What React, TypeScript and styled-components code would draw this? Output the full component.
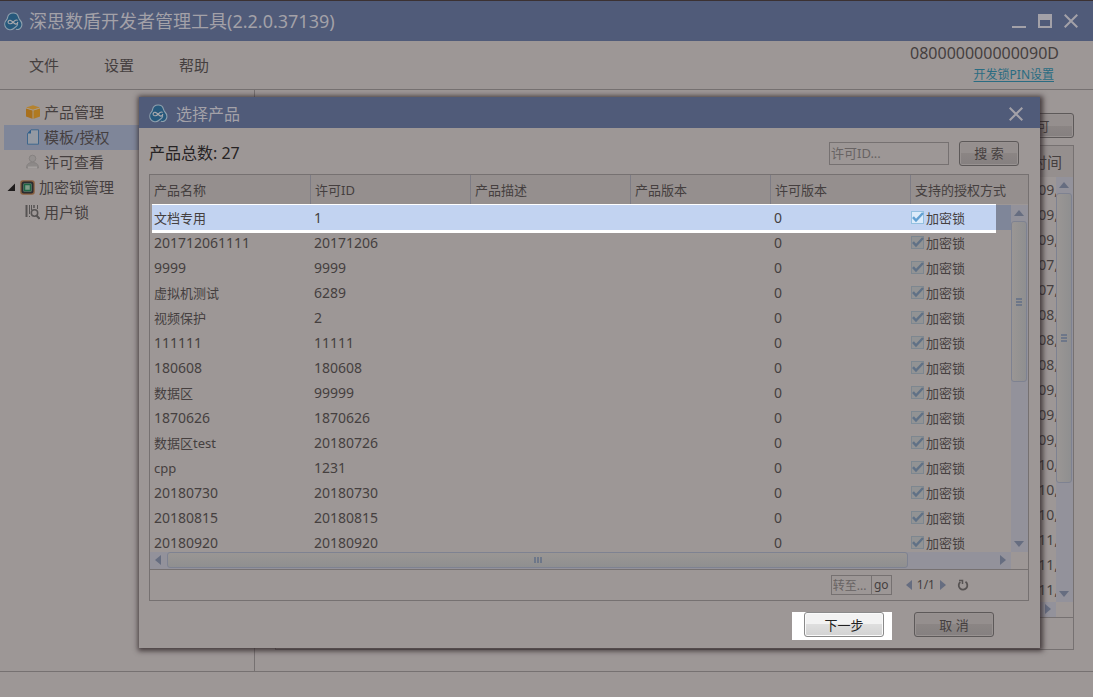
import React from "react";
import styled, { createGlobalStyle, css } from "styled-components";

const c = {
  page: "#9d9796",
  blue: "#505b79",
  titleText: "#a3a1a8",
  line: "#767171",
  text: "#453f3f",
  strong: "#262324",
  head: "#958f8e",
  selectDim: "#7f8699",
  selectBright: "#c2d3f1",
  track: "#93929b",
  trackEdge: "#7e8291",
  arrow: "#666d80",
};

const GlobalStyle = createGlobalStyle`
  * { box-sizing: border-box; }
  body {
    margin: 0;
    background: ${c.page};
    color: ${c.text};
    font-family: "Noto Sans", "Noto Sans CJK SC", sans-serif;
    font-size: 13px;
    line-height: 20px;
  }
  button, input { font-family: inherit; }
`;

const Window = styled.div`
  position: relative;
  min-height: 100vh;
  display: flex;
  flex-direction: column;
  overflow: hidden;
`;

const TitleBar = styled.header`
  height: 41px;
  border-top: 1px solid #3b3132;
  background: ${c.blue};
  color: ${c.titleText};
  display: flex;
  align-items: center;
  gap: 6px;
  padding: 0 15px 0 4px;
`;

const AppTitle = styled.h1`
  flex: 1;
  margin: 0;
  font-size: 18px;
  font-weight: 400;
  line-height: 24px;
`;

const WindowButtons = styled.div`
  display: flex;
  gap: 12px;
`;

const GlyphButton = styled.button`
  display: flex;
  padding: 0;
  border: 0;
  background: none;
  color: inherit;
`;

const MenuBar = styled.div`
  height: 49px;
  border-bottom: 1px solid ${c.line};
  display: flex;
  justify-content: space-between;
  padding: 0 34px 0 29px;
`;

const Menus = styled.nav`
  display: flex;
  align-items: center;
  gap: 45px;
`;

const MenuButton = styled.button`
  padding: 0;
  border: 0;
  background: none;
  color: ${c.text};
  font-size: 15px;
  line-height: 20px;
`;

const LockInfo = styled.div`
  display: flex;
  flex-direction: column;
  align-items: flex-end;
  font-size: 16px;
  line-height: 24px;
`;

const PinLink = styled.a`
  margin-right: 5px;
  color: #2a6c82;
  font-size: 12px;
  line-height: 20px;
  text-underline-offset: 2px;
`;

const Body = styled.div`
  flex: 1;
  display: flex;
  border-bottom: 1px solid ${c.line};
`;

const Sidebar = styled.nav`
  width: 255px;
  border-right: 1px solid ${c.line};
  padding: 10px 0 0 4px;
`;

const Tree = styled.ul`
  list-style: none;
  margin: 0;
  padding: 0;
`;

const TreeLink = styled.a<{ $active?: boolean; $group?: boolean }>`
  display: flex;
  align-items: center;
  gap: 4px;
  height: 25px;
  padding: 0 0 2px ${(p) => (p.$group ? 3 : 20)}px;
  background: ${(p) => (p.$active ? c.selectDim : "none")};
  color: ${c.text};
  font-size: 15px;
  text-decoration: none;
`;

const Content = styled.main`
  flex: 1;
  display: flex;
  flex-direction: column;
  padding: 23px 19px 21px 20px;
`;

const ContentTools = styled.div`
  display: flex;
  justify-content: flex-end;
  margin-bottom: 7px;
`;

const PushButton = styled.button<{ $width: number; $bright?: boolean }>`
  width: ${(p) => p.$width}px;
  height: 25px;
  padding: 0;
  border: 1px solid ${(p) => (p.$bright ? "#8a8a8a" : "#5d5959")};
  border-radius: 3px;
  box-shadow: inset 0 0 0 1px ${(p) => (p.$bright ? "#fafafa" : "#989291")};
  background: ${(p) =>
    p.$bright
      ? "linear-gradient(#f2f2f2 50%, #dedede 50%, #d2d2d2)"
      : "linear-gradient(#958f8e 50%, #8b8584 50%, #858080)"};
  color: ${(p) => (p.$bright ? "#222" : c.text)};
  font-size: 13px;
  line-height: 20px;
`;

const LicensePanel = styled.section`
  flex: 1;
  display: flex;
  flex-direction: column;
  border: 1px solid ${c.line};
`;

const LicenseList = styled.div`
  display: grid;
  grid-template-columns: 1fr 17px;
  grid-template-rows: 31px 425px 15px;
  border-bottom: 1px solid ${c.line};
`;

const LicenseTable = styled.table`
  border-collapse: collapse;
  width: 100%;
  th {
    height: 31px;
    padding: 0 11px 0 0;
    background: ${c.head};
    font-size: 15px;
    font-weight: 400;
    text-align: right;
  }
  td {
    height: 25px;
    padding: 0 15px 0 0;
    font-size: 14px;
    text-align: right;
  }
`;

const TableArea = styled.div`
  grid-area: 1 / 1 / 3 / 3;
  overflow: hidden;
  min-height: 0;
`;

const trackStyle = css`
  display: flex;
  align-items: center;
  background: ${c.track};
  z-index: 1;
`;

const VTrack = styled.div`
  ${trackStyle}
  grid-area: 2 / 2;
  flex-direction: column;
  padding: 5px 1px 5px 0;
`;

const HTrack = styled.div`
  ${trackStyle}
  grid-area: 3 / 1;
  padding: 0 5px 1px;
`;

const VThumb = styled.div<{ $size: number }>`
  flex: 0 0 ${(p) => p.$size}px;
  align-self: stretch;
  margin: 5px 0 auto;
  border: 1px solid ${c.trackEdge};
  border-radius: 3px;
  background: linear-gradient(to right, #9a9694, #8f8f90);
  display: grid;
  place-items: center;
`;

const HThumb = styled.div`
  flex: 0 1 741px;
  height: 16px;
  margin: 0 auto 0 6px;
  border: 1px solid ${c.trackEdge};
  border-radius: 3px;
  background: linear-gradient(#9a9694, #8f8f90);
  display: grid;
  place-items: center;
`;

const StatusBar = styled.footer`
  height: 25px;
`;

const Dialog = styled.section`
  position: absolute;
  z-index: 2;
  top: 97px;
  left: 139px;
  right: 53px;
  background: ${c.page};
  box-shadow: 1px 1px 5px 2px rgba(40, 30, 32, 0.75);
`;

const DialogBar = styled.header`
  display: flex;
  align-items: center;
  gap: 8px;
  height: 31px;
  padding: 2px 17px 0 10px;
  background: ${c.blue};
  color: ${c.titleText};
`;

const DialogTitle = styled.h2`
  flex: 1;
  margin: 0;
  font-size: 16px;
  font-weight: 400;
  line-height: 24px;
`;

const DialogBody = styled.div`
  padding: 12px 11px 8px 10px;
`;

const SearchRow = styled.form`
  display: flex;
  align-items: center;
  gap: 10px;
  height: 26px;
  margin-bottom: 8px;
  padding-right: 10px;
`;

const Total = styled.p`
  flex: 1;
  margin: 0;
  color: ${c.strong};
  font-size: 16px;
`;

const TextField = styled.input<{ $width: number; $height: number }>`
  width: ${(p) => p.$width}px;
  height: ${(p) => p.$height}px;
  padding: 0 2px 0 1px;
  border: 1px solid ${c.line};
  border-radius: 0;
  background: none;
  color: ${c.text};
  font-size: ${(p) => (p.$height > 20 ? 13 : 12)}px;
  &::placeholder { color: #686363; opacity: 1; }
`;

const ProductPanel = styled.div`
  border: 1px solid ${c.line};
`;

const ProductGrid = styled.div`
  display: grid;
  grid-template-columns: 1fr 17px;
  grid-template-rows: 30px 347px 17px;
  border-bottom: 1px solid ${c.line};
`;

/* White frame that marks the chosen row. */
const RowSpotlight = styled.div`
  grid-area: 2 / 1;
  height: 29px;
  margin: -1px 15px 0 2px;
  background: #fff;
`;

const ProductTable = styled.table`
  position: relative;
  table-layout: fixed;
  width: 100%;
  border-collapse: separate;
  border-spacing: 0;
`;

const HeadCell = styled.th<{ $width?: number }>`
  width: ${(p) => (p.$width ? `${p.$width}px` : "auto")};
  height: 29px;
  padding: 0 4px;
  border-right: 1px solid ${(p) => (p.$width ? "#7d7c85" : "transparent")};
  background: ${c.head};
  font-weight: 400;
  text-align: left;
  white-space: nowrap;
`;

const HeadGap = styled.td`
  height: 1px;
  padding: 0;
`;

const Row = styled.tr<{ $selected: boolean }>`
  background: ${(p) =>
    p.$selected
      ? `linear-gradient(to right, transparent 2px, ${c.selectBright} 2px, ${c.selectBright} calc(100% - 32px), ${c.selectDim} calc(100% - 32px))`
      : "none"};
`;

const Cell = styled.td<{ $digits?: boolean }>`
  height: 25px;
  padding: 0 3px;
  font-size: ${(p) => (p.$digits ? 14 : 13)}px;
  white-space: nowrap;
  &:first-child { padding-left: 4px; }
`;

const CheckCell = styled(Cell)`
  padding: 0;
`;

const CheckLabel = styled.label`
  display: flex;
  align-items: center;
  gap: 2px;
`;

const CheckBox = styled.span<{ $bright: boolean }>`
  display: grid;
  color: ${(p) => (p.$bright ? "#62a0d2" : "#607186")};
  input, svg { grid-area: 1 / 1; }
  input {
    appearance: none;
    width: 13px;
    height: 13px;
    margin: 0;
    border: 1px solid ${(p) => (p.$bright ? "#94c0e0" : "#7d8790")};
    background: ${(p) => (p.$bright ? "#dcebfa" : "#929394")};
  }
  svg { pointer-events: none; }
`;

const Pager = styled.div`
  display: flex;
  align-items: center;
  justify-content: flex-end;
  height: 30px;
  padding-right: 59px;
  font-size: 12px;
`;

const GoButton = styled.button`
  width: 21px;
  height: 20px;
  margin: 0 14px 0 -1px;
  padding: 0;
  border: 1px solid ${c.line};
  background: none;
  color: ${c.text};
  font-size: 12px;
  line-height: 16px;
`;

const PageCount = styled.span`
  margin: 0 5px;
`;

const RefreshButton = styled(GlyphButton)`
  margin-left: 11px;
`;

const Actions = styled.div`
  display: flex;
  justify-content: flex-end;
  gap: 22px;
  padding: 11px 35px 0 0;
`;

const ActionSpotlight = styled.div`
  padding: 0 8px 3px 12px;
  background: #fff;
`;

function Logo() {
  return (
    <svg width="19" height="19" viewBox="0 0 19 19" fill="none" aria-hidden="true">
      <path
        d="M9 1C12 .6 13.800 2.300 14.400 4.800 14.800 6.500 16.200 7.200 17.200 8.900 18.600 11.500 18.300 14.500 16.500 16.300 15.400 17.500 13.500 18 12 17.300H9C6.500 18.600 3.300 17.800 1.800 15.500.300 13.200.500 10 2.300 8.200 3.300 7.100 3.400 6.500 3.700 5 4.200 2.600 6.300 1.100 9 1Z"
        fill="#27597c"
      />
      <path
        d="M12.300 17.200C14.500 18.200 16.800 16.500 17.500 14.500 18.400 12 17.700 9.800 16 8 15 7 14.800 6 14.400 4.800 13.700 2.300 11.700.900 9 1 6.300 1.100 4.200 2.600 3.700 5 3.400 6.500 3.300 7.100 2.300 8.200.500 10 .300 13.200 1.800 15.500 3.500 18 7.500 18.500 9.700 16.500 11 15.300 13.600 14.400 13.700 12"
        stroke="#8fa0ad"
        strokeWidth="1.100"
        strokeLinecap="round"
      />
      <path
        d="M13.200 8.200C11.300 7.300 10 9.300 8.800 10.500 7.500 11.800 5.400 12.300 4.400 11 3.500 9.700 4.700 8 6.300 8.300 8 8.600 9 10.300 10.500 11.500 11.800 12.500 13.700 12 13.700 10.300"
        stroke="#a9a9ad"
        strokeWidth="1.200"
        strokeLinecap="round"
      />
    </svg>
  );
}

function CloseGlyph() {
  return (
    <svg width="14" height="14" viewBox="0 0 14 14" stroke="currentColor" strokeWidth="2" aria-hidden="true">
      <path d="M.7.7 13.300 13.300M13.300.7.7 13.300" />
    </svg>
  );
}

type ArrowDir = "up" | "down" | "left" | "right";

const arrowPaths: Record<ArrowDir, [number, number, string]> = {
  up: [10, 6, "M0 6 5 0 10 6Z"],
  down: [10, 6, "M0 0 5 6 10 0Z"],
  left: [6, 10, "M6 0 0 5 6 10Z"],
  right: [6, 10, "M0 0 6 5 0 10Z"],
};

function Arrow({ dir }: { dir: ArrowDir }) {
  const [w, h, d] = arrowPaths[dir];
  return (
    <svg width={w} height={h} viewBox={`0 0 ${w} ${h}`} aria-hidden="true">
      <path d={d} fill={c.arrow} />
    </svg>
  );
}

function Grip({ vertical }: { vertical?: boolean }) {
  return (
    <svg width="8" height="8" viewBox="0 0 8 8" stroke="#626f87" aria-hidden="true">
      <path d={vertical ? "M1 1H7M1 4H7M1 7H7" : "M1 1V7M4 1V7M7 1V7"} strokeWidth="1.500" />
    </svg>
  );
}

function BoxIcon() {
  return (
    <svg width="16" height="16" viewBox="0 0 16 16" aria-hidden="true">
      <path d="M2 4 9 6.500V15L2 12.500Z" fill="#a8701d" />
      <path d="M16 4 9 6.500V15L16 12.500Z" fill="#b07a20" />
      <path d="M2 3.500 9 1.200 16 3.500 9 6Z" fill="#b5832f" />
      <path d="M9 6.500V15M2 4 9 6.200 16 4" stroke="#a99a86" fill="none" />
    </svg>
  );
}

function DocIcon() {
  return (
    <svg width="16" height="16" viewBox="0 0 16 16" aria-hidden="true">
      <path d="M7 .8H14.500V15.200H3.500V4.500Z" fill="#949aa3" stroke="#3f678d" />
      <path d="M7 .8V4.500H3.500Z" fill="#2f5f8b" />
    </svg>
  );
}

function PersonIcon() {
  return (
    <svg width="16" height="16" viewBox="0 0 16 16" aria-hidden="true">
      <path d="M2.500 14C2.500 10 5 8.500 8.500 8.500s6 1.500 6 5.500Z" fill="#8d8988" stroke="#868281" />
      <path d="M4 13.500H13" stroke="#a5a09f" strokeWidth="2" />
      <circle cx="8.500" cy="4.500" r="3.300" fill="#94908f" stroke="#868281" />
    </svg>
  );
}

function ChipIcon() {
  return (
    <svg width="16" height="16" viewBox="0 0 16 16" aria-hidden="true">
      <rect x="2" y="2" width="13" height="13" rx="2" fill="#89572f" stroke="#89603f" strokeWidth="1.500" />
      <rect x="3.500" y="3.500" width="10" height="10" rx="1.500" fill="#8fa395" stroke="#2b2c30" strokeWidth="2" />
      <rect x="5.500" y="5.500" width="6" height="6" fill="#7f9b88" stroke="#1f6645" strokeWidth="1.500" />
    </svg>
  );
}

function UserLockIcon() {
  return (
    <svg width="16" height="16" viewBox="0 0 16 16" fill="none" stroke="#565353" aria-hidden="true">
      <path d="M2.500 1V13" strokeWidth="2" />
      <path d="M5.500 1V10M7.500 1V6M5.500 12V13M13.500 1V5" />
      <path d="M10 1V4" strokeWidth="1.500" />
      <circle cx="10.500" cy="9" r="3.200" strokeWidth="1.500" />
      <path d="M12.500 11.500 15.500 14.800" strokeWidth="2" />
    </svg>
  );
}

const treeItems: { label: string; icon: React.ReactNode; active?: boolean; group?: boolean }[] = [
  { label: "产品管理", icon: <BoxIcon /> },
  { label: "模板/授权", icon: <DocIcon />, active: true },
  { label: "许可查看", icon: <PersonIcon /> },
  { label: "加密锁管理", icon: <ChipIcon />, group: true },
  { label: "用户锁", icon: <UserLockIcon /> },
];

const licenseDates = ["09", "09", "09", "07", "07", "08", "08", "08", "09", "09", "09", "10", "10", "10", "11", "11", "11"];

const products: [string, string][] = [
  ["文档专用", "1"],
  ["201712061111", "20171206"],
  ["9999", "9999"],
  ["虚拟机测试", "6289"],
  ["视频保护", "2"],
  ["111111", "11111"],
  ["180608", "180608"],
  ["数据区", "99999"],
  ["1870626", "1870626"],
  ["数据区test", "20180726"],
  ["cpp", "1231"],
  ["20180730", "20180730"],
  ["20180815", "20180815"],
  ["20180920", "20180920"],
];

const columns: [string, number?][] = [
  ["产品名称", 161],
  ["许可ID", 160],
  ["产品描述", 160],
  ["产品版本", 140],
  ["许可版本", 140],
  ["支持的授权方式"],
];

function ProductRow({ name, id, selected }: { name: string; id: string; selected: boolean }) {
  return (
    <Row $selected={selected}>
      <Cell $digits={/^\d+$/.test(name)}>{name}</Cell>
      <Cell $digits>{id}</Cell>
      <Cell />
      <Cell />
      <Cell $digits>0</Cell>
      <CheckCell>
        <CheckLabel>
          <CheckBox $bright={selected}>
            <input type="checkbox" defaultChecked />
            <svg width="13" height="13" viewBox="0 0 13 13" fill="none" stroke="currentColor" strokeWidth="2.500" aria-hidden="true">
              <path d="M2 6.200 5 9.500 12 2" />
            </svg>
          </CheckBox>
          加密锁
        </CheckLabel>
      </CheckCell>
    </Row>
  );
}

function ProductDialog() {
  return (
    <Dialog role="dialog" aria-labelledby="dialog-title">
      <DialogBar>
        <Logo />
        <DialogTitle id="dialog-title">选择产品</DialogTitle>
        <GlyphButton type="button" aria-label="关闭">
          <CloseGlyph />
        </GlyphButton>
      </DialogBar>
      <DialogBody>
        <SearchRow onSubmit={(e) => e.preventDefault()}>
          <Total>产品总数: 27</Total>
          <TextField $width={120} $height={23} placeholder="许可ID..." aria-label="许可ID" />
          <PushButton $width={60}>搜 索</PushButton>
        </SearchRow>
        <ProductPanel>
          <ProductGrid>
            <RowSpotlight />
            <TableArea>
              <ProductTable>
                <thead>
                  <tr>
                    {columns.map(([label, width]) => (
                      <HeadCell key={label} $width={width}>
                        {label}
                      </HeadCell>
                    ))}
                  </tr>
                  <tr>
                    <HeadGap colSpan={6} />
                  </tr>
                </thead>
                <tbody>
                  {products.map(([name, id], i) => (
                    <ProductRow key={id} name={name} id={id} selected={i === 0} />
                  ))}
                </tbody>
              </ProductTable>
            </TableArea>
            <VTrack>
              <Arrow dir="up" />
              <VThumb $size={161}>
                <Grip vertical />
              </VThumb>
              <Arrow dir="down" />
            </VTrack>
            <HTrack>
              <Arrow dir="left" />
              <HThumb>
                <Grip />
              </HThumb>
              <Arrow dir="right" />
            </HTrack>
          </ProductGrid>
          <Pager>
            <TextField $width={41} $height={20} placeholder="转至..." aria-label="转至" />
            <GoButton type="button">go</GoButton>
            <GlyphButton type="button" aria-label="上一页">
              <Arrow dir="left" />
            </GlyphButton>
            <PageCount>1/1</PageCount>
            <GlyphButton type="button" aria-label="下一页">
              <Arrow dir="right" />
            </GlyphButton>
            <RefreshButton type="button" aria-label="刷新">
              <svg width="12" height="12" viewBox="0 0 12 12" fill="none" stroke="#575353" strokeWidth="1.800" aria-hidden="true">
                <path d="M8.500 2.800A4.300 4.300 0 1 1 3.300 3" />
                <path d="M2 1.500H5.500V5" strokeWidth="1.500" />
              </svg>
            </RefreshButton>
          </Pager>
        </ProductPanel>
        <Actions>
          <ActionSpotlight>
            <PushButton type="button" $width={80} $bright>
              下一步
            </PushButton>
          </ActionSpotlight>
          <PushButton type="button" $width={80}>
            取 消
          </PushButton>
        </Actions>
      </DialogBody>
    </Dialog>
  );
}

export default function App() {
  return (
    <>
      <GlobalStyle />
      <Window>
        <TitleBar>
          <Logo />
          <AppTitle>深思数盾开发者管理工具(2.2.0.37139)</AppTitle>
          <WindowButtons>
            <GlyphButton type="button" aria-label="最小化">
              <svg width="14" height="14" viewBox="0 0 14 14" aria-hidden="true">
                <path d="M0 13H14" stroke="currentColor" strokeWidth="2" />
              </svg>
            </GlyphButton>
            <GlyphButton type="button" aria-label="最大化">
              <svg width="14" height="14" viewBox="0 0 14 14" aria-hidden="true">
                <path d="M0 0H14V14H0ZM2 6V12H12V6Z" fill="currentColor" fillRule="evenodd" />
              </svg>
            </GlyphButton>
            <GlyphButton type="button" aria-label="关闭">
              <CloseGlyph />
            </GlyphButton>
          </WindowButtons>
        </TitleBar>
        <MenuBar>
          <Menus>
            <MenuButton type="button">文件</MenuButton>
            <MenuButton type="button">设置</MenuButton>
            <MenuButton type="button">帮助</MenuButton>
          </Menus>
          <LockInfo>
            <span>080000000000090D</span>
            <PinLink href="#pin">开发锁PIN设置</PinLink>
          </LockInfo>
        </MenuBar>
        <Body>
          <Sidebar>
            <Tree>
              {treeItems.map((item) => (
                <li key={item.label}>
                  <TreeLink href="#tree" $active={item.active} $group={item.group}>
                    {item.group && (
                      <svg width="8" height="8" viewBox="0 0 8 8" aria-hidden="true">
                        <path d="M8 .5V8H.5Z" fill="#1f1c1c" />
                      </svg>
                    )}
                    {item.icon}
                    {item.label}
                  </TreeLink>
                </li>
              ))}
            </Tree>
          </Sidebar>
          <Content>
            <ContentTools>
              <PushButton type="button" $width={62}>
                可
              </PushButton>
            </ContentTools>
            <LicensePanel>
              <LicenseList>
                <TableArea>
                  <LicenseTable>
                    <thead>
                      <tr>
                        <th>时间</th>
                      </tr>
                    </thead>
                    <tbody>
                      {licenseDates.map((d, i) => (
                        <tr key={i}>
                          <td>{d},</td>
                        </tr>
                      ))}
                    </tbody>
                  </LicenseTable>
                </TableArea>
                <VTrack>
                  <Arrow dir="up" />
                  <VThumb $size={290}>
                    <Grip vertical />
                  </VThumb>
                  <Arrow dir="down" />
                </VTrack>
                <HTrack>
                  <Arrow dir="left" />
                  <HThumb />
                  <Arrow dir="right" />
                </HTrack>
              </LicenseList>
            </LicensePanel>
          </Content>
        </Body>
        <StatusBar />
      </Window>
      <ProductDialog />
    </>
  );
}
